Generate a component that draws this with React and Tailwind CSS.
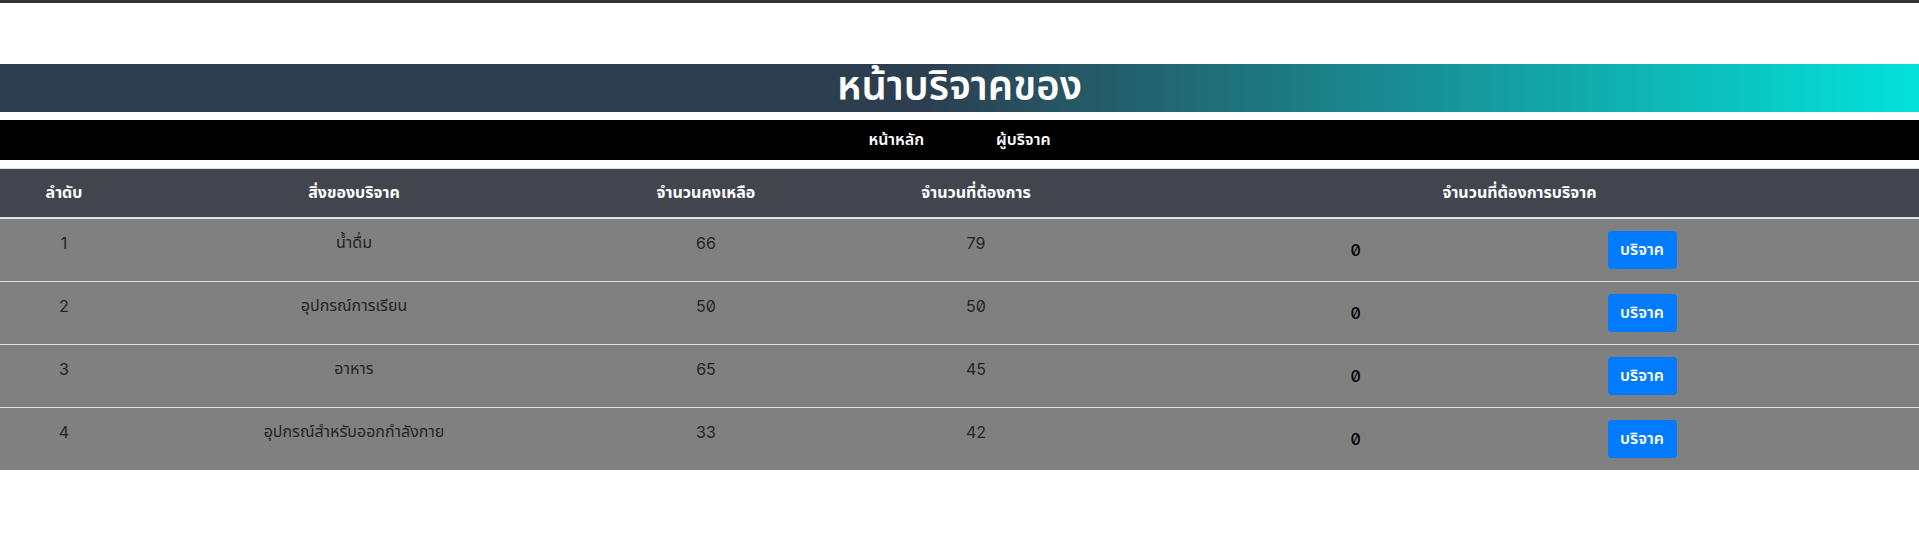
import React from "react";

const items = [
  { id: 1, name: "น้ำดื่ม", left: 66, need: 79 },
  { id: 2, name: "อุปกรณ์การเรียน", left: 50, need: 50 },
  { id: 3, name: "อาหาร", left: 65, need: 45 },
  { id: 4, name: "อุปกรณ์สำหรับออกกำลังกาย", left: 33, need: 42 },
];

const DonatePage = () => {
  return (
    <div className="min-h-screen bg-white font-['Noto_Sans_Thai','Noto_Sans','DejaVu_Sans',sans-serif] text-[#212529]">
      <div className="h-[3px] bg-[#333333]" />

      {/* banner */}
      <h1 className="mt-[61px] h-12 bg-[linear-gradient(to_right,#2c3e50_48%,#04e2da)] text-center text-[40px] font-semibold leading-[48px] text-white">
        หน้าบริจาคของ
      </h1>

      {/* menu */}
      <nav className="mt-2 flex h-10 items-center justify-center gap-[72px] bg-black text-[16px] font-semibold text-white">
        <a href="#">หน้าหลัก</a>
        <a href="#">ผู้บริจาค</a>
      </nav>

      <table className="mt-2 w-full border-collapse text-center text-base">
        <thead>
          <tr className="bg-[#42454e] text-white">
            <th className="w-[128px] border-t border-b-2 border-[#dee2e6] p-3 font-bold leading-6">ลำดับ</th>
            <th className="w-[452px] border-t border-b-2 border-[#dee2e6] p-3 font-bold leading-6">สิ่งของบริจาค</th>
            <th className="w-[252px] border-t border-b-2 border-[#dee2e6] p-3 font-bold leading-6">จำนวนคงเหลือ</th>
            <th className="w-[288px] border-t border-b-2 border-[#dee2e6] p-3 font-bold leading-6">จำนวนที่ต้องการ</th>
            <th className="border-t border-b-2 border-[#dee2e6] p-3 font-bold leading-6">จำนวนที่ต้องการบริจาค</th>
          </tr>
        </thead>
        <tbody>
          {items.map((item) => (
            <tr key={item.id} className="bg-[#808080]">
              <td className="border-t border-[#dee2e6] p-3 align-top leading-6 font-['Inter',sans-serif] slashed-zero">{item.id}</td>
              <td className="border-t border-[#dee2e6] p-3 align-top leading-6">{item.name}</td>
              <td className="border-t border-[#dee2e6] p-3 align-top leading-6 font-['Inter',sans-serif] slashed-zero">{item.left}</td>
              <td className="border-t border-[#dee2e6] p-3 align-top leading-6 font-['Inter',sans-serif] slashed-zero">{item.need}</td>
              <td className="border-t border-[#dee2e6] p-3 align-top">
                <div className="mr-3 flex items-center justify-center">
                  <span className="w-[257px] text-left font-['Inter',sans-serif] text-[16px] font-medium text-black slashed-zero">0</span>
                  <button className="h-[38px] w-[69px] rounded-[4px] bg-[#007bff] text-base font-semibold leading-6 text-white">
                    บริจาค
                  </button>
                </div>
              </td>
            </tr>
          ))}
        </tbody>
      </table>
    </div>
  );
};

export default DonatePage;
